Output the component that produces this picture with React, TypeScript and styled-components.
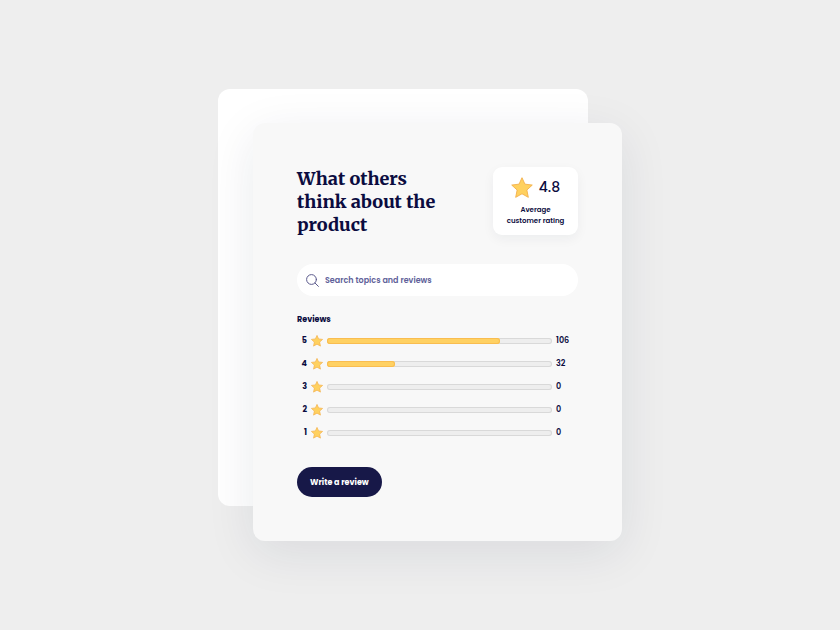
import React from "react";
import styled, { createGlobalStyle } from "styled-components";

const INK = "#0b0c40";
const SANS = `Poppins, Inter, "Open Sans", sans-serif`;

const GlobalStyle = createGlobalStyle`
  *, *::before, *::after { box-sizing: border-box; }
  body {
    margin: 0;
    background: #eeeeee;
    color: ${INK};
    font-family: ${SANS};
  }
`;

const Page = styled.main`
  min-height: 100vh;
  display: grid;
  grid-template-columns: minmax(0, 404px);
  place-content: center;
  padding: 24px 0;
`;

const Stack = styled.div`
  display: grid;
  grid-template-areas: "stack";
`;

const BackSheet = styled.div`
  grid-area: stack;
  margin: 0 34px 35px 0;
  border-radius: 12px;
  background: #ffffff;
`;

const Card = styled.section`
  grid-area: stack;
  margin: 34px 0 0 35px;
  padding: 44px;
  border-radius: 12px;
  background: #f8f8f8;
  box-shadow: 0 12px 50px rgba(24, 32, 72, 0.09);
`;

const Header = styled.header`
  display: flex;
  justify-content: space-between;
  align-items: flex-start;
  gap: 16px;
`;

const Title = styled.h1`
  flex: 0 1 150px;
  margin: 0;
  font: 800 18px/23px Merriweather, "Liberation Serif", serif;
`;

const RatingCard = styled.div`
  flex: 0 0 85px;
  min-height: 68px;
  padding: 8px 12px;
  border-radius: 9px;
  background: #ffffff;
  box-shadow: 0 4px 12px rgba(28, 32, 60, 0.05);
  text-align: center;
`;

const Score = styled.div`
  display: flex;
  align-items: center;
  justify-content: center;
  gap: 6px;
  font-size: 14px;
  line-height: 25px;
  font-weight: 500;
`;

const ScoreLabel = styled.p`
  margin: 4px 0 0;
  font-size: 7px;
  line-height: 11px;
  font-weight: 600;
`;

const StarIcon = styled.svg<{ $size: number }>`
  display: block;
  width: ${({ $size }) => $size}px;
  height: ${({ $size }) => $size}px;
  fill: #ffd15f;
  stroke: #f3b04b;
  stroke-linejoin: round;
`;

const SearchBox = styled.label`
  display: flex;
  align-items: center;
  gap: 6px;
  height: 32px;
  margin-top: 28px;
  padding: 0 9px;
  border-radius: 16px;
  background: #ffffff;
`;

const SearchIcon = styled.svg`
  flex: none;
  width: 13px;
  height: 13px;
  fill: none;
  stroke: #5b5a8c;
  stroke-linecap: round;
`;

const SearchInput = styled.input`
  flex: 1;
  min-width: 0;
  padding: 0;
  border: 0;
  outline: 0;
  background: transparent;
  color: ${INK};
  font: 600 8px/15px ${SANS};

  &::placeholder {
    color: #605f99;
    opacity: 1;
  }
`;

const SectionTitle = styled.h2`
  margin: 16px 0 6px;
  font-size: 8px;
  line-height: 15px;
  font-weight: 700;
`;

const RatingList = styled.ul`
  display: grid;
  gap: 9px;
  margin: 0;
  padding: 0;
  list-style: none;
`;

const RatingRow = styled.li`
  display: grid;
  grid-template-columns: 10px 12px 1fr 22px;
  align-items: center;
  gap: 4px;
  height: 14px;
  font-size: 8px;
  line-height: 15px;
`;

const Level = styled.span`
  font-weight: 700;
  text-align: right;
`;

const Count = styled.span`
  font-weight: 600;
`;

const Track = styled.div`
  height: 6px;
  border-radius: 3px;
  background: #eeeeee;
  box-shadow: inset 0 0 0 1px #d9d9d9;
`;

const Fill = styled.div`
  height: 100%;
  border-radius: 3px;
  background: #ffd163;
  box-shadow: inset 0 0 0 1px #f9bd50;
`;

const WriteButton = styled.button`
  display: block;
  height: 30px;
  margin-top: 28px;
  padding: 0 13px;
  border: 0;
  border-radius: 15px;
  background: #171848;
  color: #ffffff;
  font: 700 8px/15px ${SANS};
  cursor: pointer;
`;

const ratings = [
  { level: 5, count: 106, share: 77 },
  { level: 4, count: 32, share: 30 },
  { level: 3, count: 0, share: 0 },
  { level: 2, count: 0, share: 0 },
  { level: 1, count: 0, share: 0 },
];

function Star({ size }: { size: number }) {
  return (
    <StarIcon
      $size={size}
      viewBox="0 0 24 24"
      strokeWidth={size > 16 ? 1 : 1.4}
      aria-hidden="true"
    >
      <path d="M12 0.8 15.2 7.8 23.2 8.8 17.3 14.2 18.9 22.2 12 18.3 5.1 22.2 6.7 14.2 0.8 8.8 8.8 7.8Z" />
    </StarIcon>
  );
}

export default function App() {
  return (
    <>
      <GlobalStyle />
      <Page>
        <Stack>
          <BackSheet />
          <Card>
            <Header>
              <Title>What others think about the product</Title>
              <RatingCard>
                <Score>
                  <Star size={22} />
                  4.8
                </Score>
                <ScoreLabel>Average customer rating</ScoreLabel>
              </RatingCard>
            </Header>
            <SearchBox>
              <SearchIcon viewBox="0 0 13 13" aria-hidden="true">
                <circle cx="5.5" cy="5.5" r="4.9" />
                <path d="M9 9 12.4 12.4" />
              </SearchIcon>
              <SearchInput
                type="search"
                aria-label="Search topics and reviews"
                placeholder="Search topics and reviews"
              />
            </SearchBox>
            <SectionTitle>Reviews</SectionTitle>
            <RatingList>
              {ratings.map(({ level, count, share }) => (
                <RatingRow key={level}>
                  <Level>{level}</Level>
                  <Star size={12} />
                  <Track
                    role="meter"
                    aria-label={`${level} star reviews`}
                    aria-valuemin={0}
                    aria-valuemax={100}
                    aria-valuenow={share}
                  >
                    <Fill style={{ width: `${share}%` }} />
                  </Track>
                  <Count>{count}</Count>
                </RatingRow>
              ))}
            </RatingList>
            <WriteButton type="button">Write a review</WriteButton>
          </Card>
        </Stack>
      </Page>
    </>
  );
}
